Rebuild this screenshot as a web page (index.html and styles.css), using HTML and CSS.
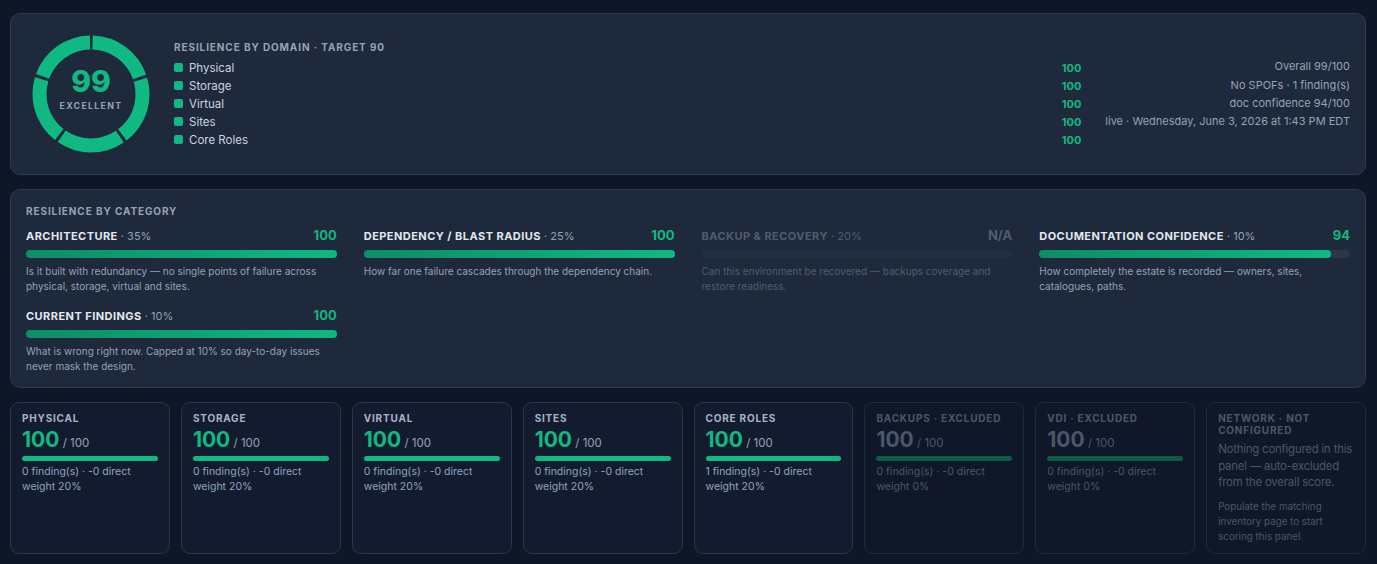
FILE: index.html
```html
<!DOCTYPE html>
<html lang="en">
<head>
    <meta charset="UTF-8">
    <meta name="viewport" content="width=device-width, initial-scale=1.0">
    <title>Resilience</title>
    <link rel="stylesheet" href="styles.css">
</head>
<body>
    <main class="page">
        <section class="panel summary">
            <div class="donut">
                <svg viewBox="0 0 118 118" width="118" height="118">
                    <circle class="ring" cx="59" cy="59" r="51.5" transform="rotate(-88.3 59 59)"/>
                </svg>
                <div class="donut-label">
                    <span class="donut-score">99</span>
                    <span class="donut-grade">Excellent</span>
                </div>
            </div>
            <div class="domains">
                <h2 class="eyebrow">Resilience by domain · Target 90</h2>
                <ul class="legend">
                    <li><span class="swatch"></span><span class="legend-name">Physical</span><b>100</b></li>
                    <li><span class="swatch"></span><span class="legend-name">Storage</span><b>100</b></li>
                    <li><span class="swatch"></span><span class="legend-name">Virtual</span><b>100</b></li>
                    <li><span class="swatch"></span><span class="legend-name">Sites</span><b>100</b></li>
                    <li><span class="swatch"></span><span class="legend-name">Core Roles</span><b>100</b></li>
                </ul>
            </div>
            <ul class="meta">
                <li>Overall 99/100</li>
                <li>No SPOFs · 1 finding(s)</li>
                <li>doc confidence 94/100</li>
                <li>live · Wednesday, June 3, 2026 at 1:43 PM EDT</li>
            </ul>
        </section>

        <section class="panel categories">
            <h2 class="eyebrow">Resilience by category</h2>
            <div class="cat-grid">
                <div class="cat">
                    <div class="cat-head"><span><b>Architecture</b> · 35%</span><strong>100</strong></div>
                    <div class="track"><div class="fill" style="width:100%"></div></div>
                    <p>Is it built with redundancy — no single points of failure across physical, storage, virtual and sites.</p>
                </div>
                <div class="cat">
                    <div class="cat-head"><span><b>Dependency / Blast radius</b> · 25%</span><strong>100</strong></div>
                    <div class="track"><div class="fill" style="width:100%"></div></div>
                    <p>How far one failure cascades through the dependency chain.</p>
                </div>
                <div class="cat cat-na">
                    <div class="cat-head"><span><b>Backup &amp; Recovery</b> · 20%</span><strong>N/A</strong></div>
                    <div class="track"></div>
                    <p>Can this environment be recovered — backups coverage and restore readiness.</p>
                </div>
                <div class="cat">
                    <div class="cat-head"><span><b>Documentation confidence</b> · 10%</span><strong>94</strong></div>
                    <div class="track"><div class="fill" style="width:94%"></div></div>
                    <p>How completely the estate is recorded — owners, sites, catalogues, paths.</p>
                </div>
                <div class="cat">
                    <div class="cat-head"><span><b>Current findings</b> · 10%</span><strong>100</strong></div>
                    <div class="track"><div class="fill" style="width:100%"></div></div>
                    <p>What is wrong right now. Capped at 10% so day-to-day issues never mask the design.</p>
                </div>
            </div>
        </section>

        <section class="cards">
            <div class="card">
                <h3>Physical</h3>
                <div class="card-score"><strong>100</strong> / 100</div>
                <div class="card-bar"></div>
                <p>0 finding(s) · -0 direct<br>weight 20%</p>
            </div>
            <div class="card">
                <h3>Storage</h3>
                <div class="card-score"><strong>100</strong> / 100</div>
                <div class="card-bar"></div>
                <p>0 finding(s) · -0 direct<br>weight 20%</p>
            </div>
            <div class="card">
                <h3>Virtual</h3>
                <div class="card-score"><strong>100</strong> / 100</div>
                <div class="card-bar"></div>
                <p>0 finding(s) · -0 direct<br>weight 20%</p>
            </div>
            <div class="card">
                <h3>Sites</h3>
                <div class="card-score"><strong>100</strong> / 100</div>
                <div class="card-bar"></div>
                <p>0 finding(s) · -0 direct<br>weight 20%</p>
            </div>
            <div class="card">
                <h3>Core Roles</h3>
                <div class="card-score"><strong>100</strong> / 100</div>
                <div class="card-bar"></div>
                <p>1 finding(s) · -0 direct<br>weight 20%</p>
            </div>
            <div class="card card-off">
                <h3>Backups · Excluded</h3>
                <div class="card-score"><strong>100</strong> / 100</div>
                <div class="card-bar"></div>
                <p>0 finding(s) · -0 direct<br>weight 0%</p>
            </div>
            <div class="card card-off">
                <h3>VDI · Excluded</h3>
                <div class="card-score"><strong>100</strong> / 100</div>
                <div class="card-bar"></div>
                <p>0 finding(s) · -0 direct<br>weight 0%</p>
            </div>
            <div class="card card-off">
                <h3>Network · Not configured</h3>
                <p class="card-note">Nothing configured in this panel — auto-excluded from the overall score.</p>
                <p class="card-hint">Populate the matching inventory page to start scoring this panel.</p>
            </div>
        </section>
    </main>
</body>
</html>
```

FILE: styles.css
```css
html {
    font-family: Inter, "Liberation Sans", sans-serif;
    color: #cbd5e1;
}
body {
    margin: 0;
    background: #0e1627;
}
ul, p, h2, h3 {
    margin: 0;
    padding: 0;
}
ul {
    list-style: none;
}
.page {
    display: flex;
    flex-direction: column;
    gap: 14px;
    padding: 13px 11px 11px 10px;
}
.panel {
    background: #1e293b;
    border: 1px solid #2d3b50;
    border-radius: 10px;
}
.eyebrow {
    font-size: 10px;
    line-height: 14px;
    font-weight: 700;
    letter-spacing: 0.9px;
    text-transform: uppercase;
    color: #94a3b8;
}

/* summary */
.summary {
    display: flex;
    align-items: center;
    gap: 24px;
    padding: 21px 15px 21px 21px;
}
.donut {
    position: relative;
    width: 118px;
    height: 118px;
    flex: none;
}
.donut svg {
    display: block;
}
.ring {
    fill: none;
    stroke: #10b981;
    stroke-width: 14;
    stroke-dasharray: 61.71 3;
}
.donut-label {
    position: absolute;
    inset: 0;
    display: flex;
    flex-direction: column;
    align-items: center;
    justify-content: center;
}
.donut-score {
    font-size: 30px;
    line-height: 30px;
    font-weight: 800;
    color: #10b981;
    margin-top: -11px;
}
.donut-grade {
    margin-top: 4px;
    font-size: 8.8px;
    font-weight: 700;
    letter-spacing: 1.3px;
    text-transform: uppercase;
    color: #94a3b8;
}
.domains {
    flex: 1;
}
.domains .eyebrow {
    margin-bottom: 5px;
}
.legend li {
    display: flex;
    align-items: center;
    height: 18px;
    font-size: 11.5px;
}
.swatch {
    width: 9px;
    height: 9px;
    border-radius: 2px;
    background: #10b981;
    margin-right: 6px;
}
.legend-name {
    flex: 1;
    color: #cbd5e1;
}
.legend b {
    font-size: 11px;
    color: #10b981;
}
.meta {
    text-align: right;
    font-size: 11px;
    color: #94a3b8;
}
.meta li {
    line-height: 18.3px;
}

/* categories */
.categories {
    padding: 14px 15px 13px 15px;
}
.cat-grid {
    margin-top: 9px;
    display: grid;
    grid-template-columns: repeat(4, 1fr);
    column-gap: 27px;
    row-gap: 13px;
}
.cat-head {
    display: flex;
    justify-content: space-between;
    align-items: baseline;
    font-size: 11px;
    line-height: 16px;
    color: #94a3b8;
}
.cat-head b {
    color: #e2e8f0;
    text-transform: uppercase;
    letter-spacing: 0.45px;
}
.cat-head strong {
    font-size: 13px;
    color: #10b981;
}
.track {
    margin-top: 6px;
    height: 8px;
    border-radius: 4px;
    background: #2a3649;
}
.fill {
    height: 100%;
    border-radius: 4px;
    background: linear-gradient(90deg, #0d8c67, #10b981);
}
.cat p {
    margin-top: 6px;
    font-size: 10px;
    line-height: 15px;
    color: #94a3b8;
}
.cat-na {
    opacity: 0.42;
}
.cat-na .cat-head b,
.cat-na .cat-head strong {
    color: #94a3b8;
}

/* domain cards */
.cards {
    display: grid;
    grid-template-columns: repeat(8, 1fr);
    gap: 11px;
}
.card {
    background: #131c2f;
    border: 1px solid #2a3649;
    border-radius: 9px;
    padding: 9px 11px 9px 11px;
}
.card h3 {
    font-size: 10px;
    line-height: 12px;
    font-weight: 700;
    letter-spacing: 0.8px;
    text-transform: uppercase;
    color: #a7b4c8;
}
.card-score {
    margin-top: 4px;
    font-size: 11.5px;
    color: #94a3b8;
}
.card-score strong {
    font-size: 21px;
    line-height: 24px;
    font-weight: 700;
    color: #10b981;
}
.card-bar {
    margin-top: 4px;
    height: 5px;
    border-radius: 3px;
    background: #10b981;
}
.card p {
    margin-top: 3px;
    font-size: 10.5px;
    line-height: 15px;
    color: #8fa3bf;
}
.card-off {
    background: #0f1729;
    border-color: #1f2a3c;
}
.card-off h3,
.card-off .card-score,
.card-off .card-score strong,
.card-off p {
    color: #4a5769;
}
.card-off .card-bar {
    background: #0c5c45;
}
.card .card-note {
    margin-top: 5px;
    margin-right: -4px;
    font-size: 11.4px;
    letter-spacing: -0.2px;
    line-height: 16.5px;
}
.card .card-hint {
    margin-top: 8px;
    font-size: 9.8px;
    line-height: 15px;
}
```
